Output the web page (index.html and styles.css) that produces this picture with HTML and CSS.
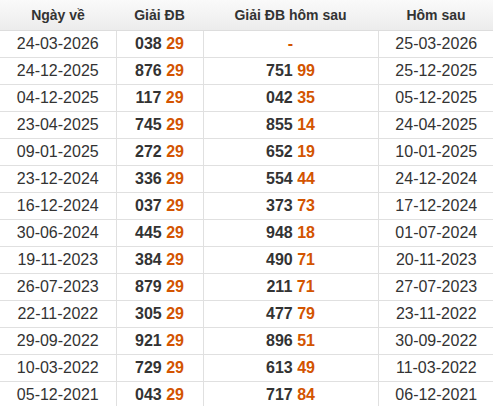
FILE: index.html
```html
<!DOCTYPE html>
<html>
<head>
<meta charset="utf-8">
<link rel="stylesheet" href="styles.css">
</head>
<body>
<table class="kq">
<colgroup><col class="c1"><col class="c2"><col class="c3"><col class="c4"></colgroup>
<thead>
<tr><th>Ngày về</th><th>Giải ĐB</th><th>Giải ĐB hôm sau</th><th>Hôm sau</th></tr>
</thead>
<tbody>
<tr><td>24-03-2026</td><td class="n">038 <span>29</span></td><td class="n"><span>-</span></td><td>25-03-2026</td></tr>
<tr><td>24-12-2025</td><td class="n">876 <span>29</span></td><td class="n">751 <span>99</span></td><td>25-12-2025</td></tr>
<tr><td>04-12-2025</td><td class="n">117 <span>29</span></td><td class="n">042 <span>35</span></td><td>05-12-2025</td></tr>
<tr><td>23-04-2025</td><td class="n">745 <span>29</span></td><td class="n">855 <span>14</span></td><td>24-04-2025</td></tr>
<tr><td>09-01-2025</td><td class="n">272 <span>29</span></td><td class="n">652 <span>19</span></td><td>10-01-2025</td></tr>
<tr><td>23-12-2024</td><td class="n">336 <span>29</span></td><td class="n">554 <span>44</span></td><td>24-12-2024</td></tr>
<tr><td>16-12-2024</td><td class="n">037 <span>29</span></td><td class="n">373 <span>73</span></td><td>17-12-2024</td></tr>
<tr><td>30-06-2024</td><td class="n">445 <span>29</span></td><td class="n">948 <span>18</span></td><td>01-07-2024</td></tr>
<tr><td>19-11-2023</td><td class="n">384 <span>29</span></td><td class="n">490 <span>71</span></td><td>20-11-2023</td></tr>
<tr><td>26-07-2023</td><td class="n">879 <span>29</span></td><td class="n">211 <span>71</span></td><td>27-07-2023</td></tr>
<tr><td>22-11-2022</td><td class="n">305 <span>29</span></td><td class="n">477 <span>79</span></td><td>23-11-2022</td></tr>
<tr><td>29-09-2022</td><td class="n">921 <span>29</span></td><td class="n">896 <span>51</span></td><td>30-09-2022</td></tr>
<tr><td>10-03-2022</td><td class="n">729 <span>29</span></td><td class="n">613 <span>49</span></td><td>11-03-2022</td></tr>
<tr><td>05-12-2021</td><td class="n">043 <span>29</span></td><td class="n">717 <span>84</span></td><td>06-12-2021</td></tr>
</tbody>
</table>
</body>
</html>
```
FILE: styles.css
```css
html, body {
  margin: 0;
  padding: 0;
  background: #fff;
}
.kq {
  border-collapse: collapse;
  table-layout: fixed;
  width: 494px;
  font-family: "Liberation Sans", Arial, sans-serif;
  color: #333;
}
.c1 { width: 116px; }
.c2 { width: 87px; }
.c3 { width: 175px; }
.c4 { width: 116px; }
.kq th {
  height: 30px;
  padding: 0;
  font-size: 14px;
  font-weight: bold;
  color: #333;
  text-align: center;
  background: linear-gradient(to bottom, #fafafa, #ececec);
  border-bottom: 1px solid #ddd;
}
.kq td {
  height: 26px;
  padding: 0;
  font-size: 16px;
  text-align: center;
  border: 1px solid #e0e0e0;
  border-top: none;
}
.kq td:first-child { border-left: none; }
.kq td:last-child { border-right: none; }
.kq td.n {
  font-weight: bold;
  font-size: 16px;
}
.kq td.n span {
  color: #d35400;
}
```
